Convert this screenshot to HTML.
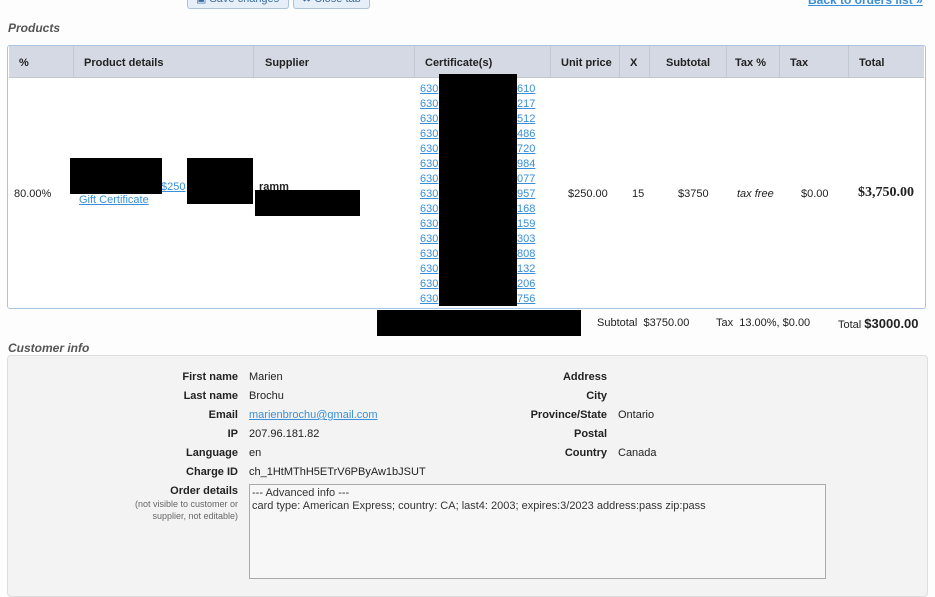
<!DOCTYPE html>
<html><head><style>
body{margin:0;width:935px;height:587px;overflow:hidden;background:#fdfdfd;font-family:"Liberation Sans",Arial,sans-serif;font-size:11px;color:#222;position:relative}
.a{position:absolute;white-space:nowrap}
a,.lk{color:#3a8fd8;text-decoration:underline}
.blk{position:absolute;background:#000}
.h{position:absolute;top:48px;height:31px;line-height:31px;font-weight:bold;font-size:11px;color:#222}
.dv{position:absolute;top:46px;height:31px;width:1px;background:#c3c7cf}
.btn{position:absolute;top:-10px;height:19px;border:1px solid #a9c3dc;border-radius:3px;background:#e6eef7;color:#3a6ea0;font-size:11px;line-height:17px;padding:0 8px;box-sizing:border-box}
.lb{position:absolute;right:697px;font-weight:bold;text-align:right}
.rl{position:absolute;right:328px;font-weight:bold;text-align:right}
</style></head><body>
<div class="btn" style="left:187px;width:102px">▣ Save changes</div>
<div class="btn" style="left:293px;width:77px">✖ Close tab</div>
<div class="a lk" style="left:808px;top:-7px;font-weight:bold;font-size:12px">Back to orders list »</div>
<div class="a" style="left:8px;top:21px;font-size:12px;font-style:italic;font-weight:bold;color:#555">Products</div>
<div style="position:absolute;left:7px;top:45px;width:917px;height:262px;border:1px solid #a9c3e3;border-radius:3px;background:#fff"></div>
<div style="position:absolute;left:9px;top:46px;width:915px;height:31px;background:#d5d9e3;border-bottom:1px solid #c3c7cf"></div>
<div class="dv" style="left:73px"></div><div class="dv" style="left:253px"></div><div class="dv" style="left:414px"></div><div class="dv" style="left:550px"></div><div class="dv" style="left:619px"></div><div class="dv" style="left:649px"></div><div class="dv" style="left:726px"></div><div class="dv" style="left:779px"></div><div class="dv" style="left:848px"></div>
<div class="h" style="left:19px">%</div><div class="h" style="left:84px">Product details</div><div class="h" style="left:265px">Supplier</div><div class="h" style="left:425px">Certificate(s)</div><div class="h" style="left:561px">Unit price</div><div class="h" style="left:630px">X</div><div class="h" style="left:666px">Subtotal</div><div class="h" style="left:735px">Tax %</div><div class="h" style="left:790px">Tax</div><div class="h" style="left:859px">Total</div>
<div class="a lk" style="left:420px;top:82px;line-height:15px">630<br>630<br>630<br>630<br>630<br>630<br>630<br>630<br>630<br>630<br>630<br>630<br>630<br>630<br>630</div>
<div class="a lk" style="left:517px;top:82px;line-height:15px">610<br>217<br>512<br>486<br>720<br>984<br>077<br>957<br>168<br>159<br>303<br>808<br>132<br>206<br>756</div>
<div class="blk" style="left:439px;top:74px;width:78px;height:232px"></div>
<div class="a" style="left:14px;top:188px">80.00%</div>
<div class="a lk" style="left:161px;top:181px">$250</div>
<div class="a lk" style="left:79px;top:194px">Gift Certificate</div>
<div class="a" style="left:259px;top:181px;font-weight:bold">ramm</div>
<div class="blk" style="left:70px;top:158px;width:92px;height:36px"></div>
<div class="blk" style="left:187px;top:158px;width:66px;height:46px"></div>
<div class="blk" style="left:255px;top:190px;width:105px;height:26px"></div>
<div class="a" style="left:568px;top:188px">$250.00</div>
<div class="a" style="left:632px;top:188px">15</div>
<div class="a" style="left:678px;top:188px">$3750</div>
<div class="a" style="left:737px;top:188px;font-style:italic">tax free</div>
<div class="a" style="left:801px;top:188px">$0.00</div>
<div class="a" style="left:858px;top:185px;font-weight:bold;font-size:14px;font-family:'Liberation Serif',serif">$3,750.00</div>
<div class="blk" style="left:377px;top:310px;width:204px;height:26px"></div>
<div class="a" style="left:597px;top:317px">Subtotal&nbsp; $3750.00</div>
<div class="a" style="left:716px;top:317px">Tax&nbsp; 13.00%, $0.00</div>
<div class="a" style="left:838px;top:316px">Total <b style="font-size:13px">$3000.00</b></div>
<div class="a" style="left:8px;top:341px;font-size:12px;font-style:italic;font-weight:bold;color:#555">Customer info</div>
<div style="position:absolute;left:7px;top:355px;width:919px;height:240px;border:1px solid #ddd;border-radius:4px;background:#f3f3f3"></div>
<div class="lb" style="top:371px">First name</div><div class="a" style="left:249px;top:371px">Marien</div>
<div class="lb" style="top:390px">Last name</div><div class="a" style="left:249px;top:390px">Brochu</div>
<div class="lb" style="top:409px">Email</div><div class="a lk" style="left:249px;top:409px">marienbrochu@gmail.com</div>
<div class="lb" style="top:428px">IP</div><div class="a" style="left:249px;top:428px">207.96.181.82</div>
<div class="lb" style="top:447px">Language</div><div class="a" style="left:249px;top:447px">en</div>
<div class="lb" style="top:466px">Charge ID</div><div class="a" style="left:249px;top:466px">ch_1HtMThH5ETrV6PByAw1bJSUT</div>
<div class="lb" style="top:485px">Order details</div>
<div class="a" style="right:697px;top:498px;font-size:9px;color:#666;text-align:right;line-height:12px">(not visible to customer or<br>supplier, not editable)</div>
<div class="rl" style="top:371px">Address</div>
<div class="rl" style="top:390px">City</div>
<div class="rl" style="top:409px">Province/State</div><div class="a" style="left:618px;top:409px">Ontario</div>
<div class="rl" style="top:428px">Postal</div>
<div class="rl" style="top:447px">Country</div><div class="a" style="left:618px;top:447px">Canada</div>
<div style="position:absolute;left:249px;top:484px;width:577px;height:95px;border:1px solid #aaa;background:#f7f7f7;box-sizing:border-box;padding:2px;font-size:11px;line-height:13px;color:#333">--- Advanced info ---<br>card type: American Express; country: CA; last4: 2003; expires:3/2023 address:pass zip:pass</div>
</body></html>
